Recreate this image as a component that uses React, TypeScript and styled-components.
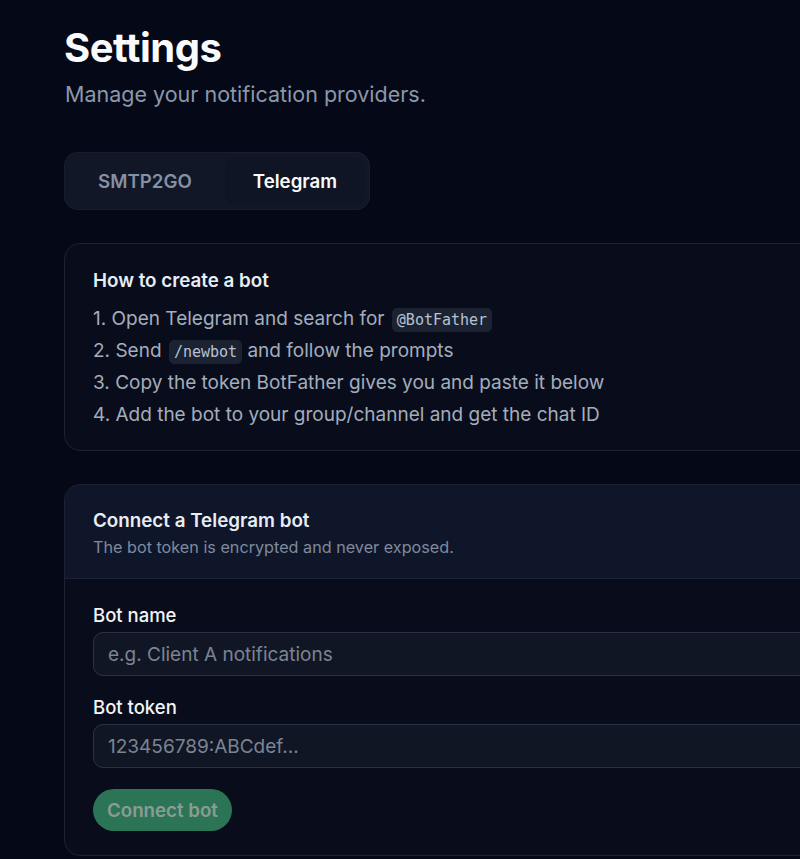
import styled, { createGlobalStyle } from 'styled-components';

const GlobalStyle = createGlobalStyle`
  html, body {
    margin: 0;
    padding: 0;
    background: #050816;
    overflow: hidden;
  }
  body {
    font-family: Inter, "Noto Sans", sans-serif;
    color: #f1f5f9;
  }
`;

const Page = styled.main`
  width: 1100px;
  padding: 24px 0 0 64px;
  box-sizing: border-box;
`;

const Title = styled.h1`
  margin: 0;
  font-size: 40px;
  line-height: 48px;
  font-weight: 700;
  letter-spacing: -0.5px;
  color: #f8fafc;
`;

const Subtitle = styled.p`
  margin: 8px 0 0 1px;
  font-size: 21.5px;
  line-height: 28px;
  color: #8b97ab;
`;

const Tabs = styled.div`
  display: inline-flex;
  margin-top: 44px;
  padding: 5px;
  gap: 4px;
  border-radius: 14px;
  background: #111727;
  box-shadow: inset 0 0 0 1px #161d2e;
`;

const Tab = styled.button<{ $active?: boolean }>`
  border: none;
  font-family: inherit;
  font-size: 18.7px;
  font-weight: 600;
  height: 48px;
  padding: 0 ${p => (p.$active ? '28px' : '29px')};
  border-radius: 11px;
  cursor: pointer;
  color: ${p => (p.$active ? '#f8fafc' : '#8590a3')};
  background: ${p => (p.$active ? '#0f1524' : 'transparent')};
`;

const Card = styled.section`
  margin-top: 33px;
  border: 1px solid #1c2334;
  border-radius: 16px;
  background: #090d1b;
  overflow: hidden;
`;

const GuideBody = styled.div`
  padding: 25px 28px 22px;
`;

const CardTitle = styled.h2`
  margin: 0;
  font-size: 18.8px;
  line-height: 24px;
  font-weight: 600;
  color: #e8edf5;
`;

const Steps = styled.ol`
  margin: 13px 0 0;
  padding: 0;
  list-style: none;
  display: flex;
  flex-direction: column;
  gap: 6px;
`;

const Step = styled.li`
  font-size: 19px;
  line-height: 26px;
  color: #a3adbd;
`;

const Code = styled.code`
  font-family: "DejaVu Sans Mono", "Liberation Mono", monospace;
  font-size: 15px;
  line-height: 1;
  color: #b8c2d1;
  background: #1b2333;
  border-radius: 5px;
  padding: 3px 5px;
  margin-left: 2px;
`;

const FormHeader = styled.div`
  padding: 24px 28px 21px;
  background: #10162a;
  border-bottom: 1px solid #1c2334;
`;

const HeaderHint = styled.p`
  margin: 4px 0 0;
  font-size: 16.2px;
  line-height: 20px;
  color: #7f8a9d;
`;

const FormBody = styled.div`
  padding: 24px 28px 24px;
  display: flex;
  flex-direction: column;
  align-items: flex-start;
`;

const Field = styled.label`
  display: flex;
  flex-direction: column;
  gap: 5px;
  width: 100%;
  margin-bottom: 19px;
`;

const Label = styled.span`
  font-size: 18.5px;
  line-height: 24px;
  font-weight: 500;
  color: #f1f5f9;
`;

const Input = styled.input`
  height: 44px;
  box-sizing: border-box;
  width: 100%;
  border: 1px solid #283246;
  border-radius: 10px;
  background: #111624;
  padding: 0 14px;
  font-family: inherit;
  font-size: 19px;
  color: #e2e8f0;
  outline: none;

  &::placeholder {
    color: #7b8494;
  }
`;

const ConnectButton = styled.button`
  margin-top: 2px;
  height: 42px;
  padding: 0 14px;
  border: none;
  border-radius: 21px;
  background: #2b7556;
  color: #8a9c94;
  font-family: inherit;
  font-size: 18.7px;
  font-weight: 600;
  cursor: not-allowed;
`;

export default function App() {
  return (
    <>
      <GlobalStyle />
      <Page>
        <Title>Settings</Title>
        <Subtitle>Manage your notification providers.</Subtitle>

        <Tabs>
          <Tab>SMTP2GO</Tab>
          <Tab $active>Telegram</Tab>
        </Tabs>

        <Card>
          <GuideBody>
            <CardTitle>How to create a bot</CardTitle>
            <Steps>
              <Step>
                1. Open Telegram and search for <Code>@BotFather</Code>
              </Step>
              <Step>
                2. Send <Code>/newbot</Code> and follow the prompts
              </Step>
              <Step>3. Copy the token BotFather gives you and paste it below</Step>
              <Step>4. Add the bot to your group/channel and get the chat ID</Step>
            </Steps>
          </GuideBody>
        </Card>

        <Card>
          <FormHeader>
            <CardTitle>Connect a Telegram bot</CardTitle>
            <HeaderHint>The bot token is encrypted and never exposed.</HeaderHint>
          </FormHeader>
          <FormBody>
            <Field>
              <Label>Bot name</Label>
              <Input placeholder="e.g. Client A notifications" />
            </Field>
            <Field>
              <Label>Bot token</Label>
              <Input placeholder="123456789:ABCdef..." />
            </Field>
            <ConnectButton disabled>Connect bot</ConnectButton>
          </FormBody>
        </Card>
      </Page>
    </>
  );
}
